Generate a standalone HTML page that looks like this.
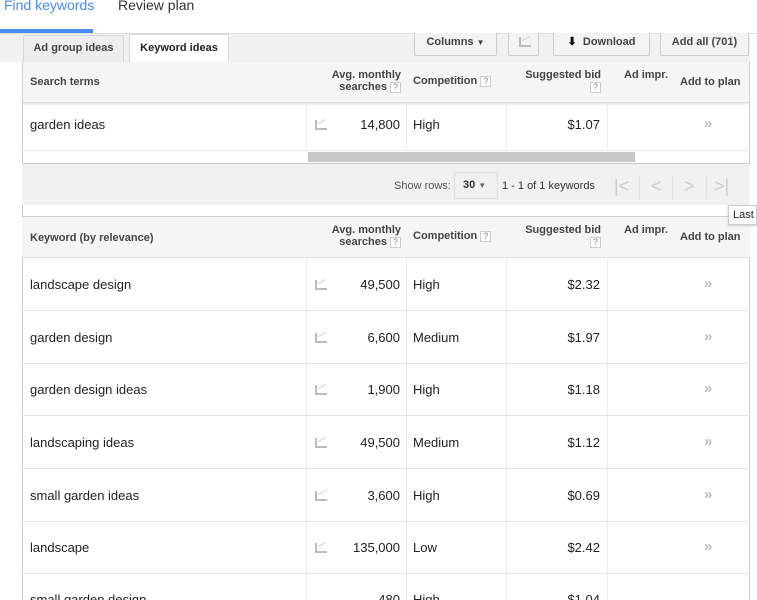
<!DOCTYPE html>
<html><head><style>
*{margin:0;padding:0;box-sizing:border-box}
html,body{width:757px;height:600px;overflow:hidden}
body{background:#fff;font-family:"Liberation Sans",Arial,sans-serif;font-size:13px;color:#222;position:relative}
.a{position:absolute}
.b{font-weight:bold;font-size:11px;color:#444}
.btn{position:absolute;top:33px;height:23px;border:1px solid #ccc;border-top:none;background:#f3f3f3;border-radius:0 0 2px 2px;font-weight:bold;font-size:11px;color:#444;text-align:center;line-height:18px}
.q{display:inline-block;width:11px;height:11px;border:1px solid #ccc;font-size:9px;line-height:9px;text-align:center;color:#888;font-weight:normal;vertical-align:middle;background:#fff}
.vl{position:absolute;width:1px;background:#ebebeb}
.hl{position:absolute;height:1px;background:#e5e5e5;left:22px;width:728px}
.chart{position:absolute;width:12px;height:10px;border-left:2px solid #bbb;border-bottom:2px solid #bbb}
.chart:after{content:"";position:absolute;left:1px;top:1px;width:8px;height:4px;border-top:1px solid #ccc;transform:skewY(-30deg)}
.dr{position:absolute;color:#bbb;font-size:15px;font-weight:bold}
</style></head><body>
<div class="a" style="left:4px;top:-3px;font-size:14px;color:#4a8af4">Find keywords</div>
<div class="a" style="left:118px;top:-3px;font-size:14px;color:#333">Review plan</div>
<div class="a" style="left:0;top:29px;width:93px;height:4px;background:#4a8af4"></div>
<div class="a" style="left:0;top:33px;width:757px;height:1px;background:#ddd"></div>
<div class="a" style="left:0;top:34px;width:750px;height:28px;background:#f1f1f1"></div>
<div class="a" style="left:22px;top:62px;width:1px;height:538px;background:#ccc"></div>
<div class="a" style="left:749px;top:62px;width:1px;height:538px;background:#ccc"></div>
<div class="a" style="left:23px;top:35px;width:101px;height:27px;background:#eee;border:1px solid #d6d6d6;border-bottom:none;border-radius:2px 2px 0 0;font-weight:bold;font-size:11px;color:#444;text-align:center;line-height:25px">Ad group ideas</div>
<div class="a" style="left:129px;top:34px;width:100px;height:29px;background:#fff;border:1px solid #d6d6d6;border-bottom:none;border-radius:2px 2px 0 0;font-weight:bold;font-size:11px;color:#222;text-align:center;line-height:27px">Keyword ideas</div>
<div class="btn" style="left:414px;width:83px">Columns <span style="font-size:8px">▼</span></div>
<div class="btn" style="left:508px;width:31px"><div class="chart" style="left:10px;top:4px"></div></div>
<div class="btn" style="left:553px;width:97px"><span style="color:#111">⬇</span> &nbsp;Download</div>
<div class="btn" style="left:660px;width:89px">Add all (701)</div>

<div class="a" style="left:23px;top:62px;width:726px;height:41px;background:#f5f5f5;border-bottom:1px solid #ddd;box-shadow:0 1px 2px #ddd"></div>
<div class="a b" style="left:30px;top:76px">Search terms</div>
<div class="a b" style="left:320px;top:69px;width:81px;text-align:right;line-height:12px">Avg. monthly<br>searches <span class="q">?</span></div>
<div class="a b" style="left:413px;top:75px">Competition <span class="q">?</span></div>
<div class="a b" style="left:510px;top:69px;width:91px;text-align:right;line-height:12px">Suggested bid<br><span class="q">?</span></div>
<div class="a b" style="left:624px;top:69px">Ad impr.</div>
<div class="a b" style="left:680px;top:76px">Add to plan</div>
<div class="vl" style="left:306px;top:103px;height:47px"></div>
<div class="vl" style="left:406px;top:103px;height:47px"></div>
<div class="vl" style="left:506px;top:103px;height:47px"></div>
<div class="vl" style="left:607px;top:103px;height:47px"></div>
<div class="a" style="left:30px;top:117px">garden ideas</div>
<div class="chart" style="left:315px;top:120px"></div>
<div class="a" style="left:330px;top:117px;width:70px;text-align:right">14,800</div>
<div class="a" style="left:413px;top:117px">High</div>
<div class="a" style="left:520px;top:117px;width:80px;text-align:right">$1.07</div>
<div class="dr" style="left:704px;top:115px">»</div>
<div class="hl" style="top:150px;background:#ebebeb"></div>
<div class="a" style="left:308px;top:152px;width:327px;height:10px;background:#c8c8c8"></div>
<div class="a" style="left:22px;top:163px;width:728px;height:42px;background:#f1f1f1;border-top:1px solid #ccc"></div>
<div class="a" style="left:394px;top:180px;font-size:11px;color:#555">Show rows:</div>
<div class="a" style="left:454px;top:172px;width:44px;height:27px;border:1px solid #ddd;border-radius:2px;font-weight:bold;font-size:11px;line-height:25px;padding-left:8px;color:#333">30 <span style="font-size:8px;color:#666">▼</span></div>
<div class="a" style="left:502px;top:180px;font-size:11px;color:#333">1 - 1 of 1 keywords</div>
<div class="a" style="left:606px;top:173px;width:135px;height:27px;color:#ccc;font-size:18px;line-height:26px">
<span class="a" style="left:8px">|&lt;</span><span class="a" style="left:45px">&lt;</span><span class="a" style="left:78px">&gt;</span><span class="a" style="left:108px">&gt;|</span></div>
<div class="vl" style="left:639px;top:175px;height:24px;background:#e4e4e4"></div>
<div class="vl" style="left:672px;top:175px;height:24px;background:#e4e4e4"></div>
<div class="vl" style="left:706px;top:175px;height:24px;background:#e4e4e4"></div>
<div class="a" style="left:23px;top:205px;width:726px;height:11px;background:#fff"></div>

<div class="a" style="left:22px;top:216px;width:728px;height:42px;background:#f5f5f5;border-top:1px solid #ccc;border-bottom:1px solid #ddd"></div>
<div class="a b" style="left:30px;top:232px">Keyword (by relevance)</div>
<div class="a b" style="left:320px;top:224px;width:81px;text-align:right;line-height:12px">Avg. monthly<br>searches <span class="q">?</span></div>
<div class="a b" style="left:413px;top:230px">Competition <span class="q">?</span></div>
<div class="a b" style="left:510px;top:224px;width:91px;text-align:right;line-height:12px">Suggested bid<br><span class="q">?</span></div>
<div class="a b" style="left:624px;top:224px">Ad impr.</div>
<div class="a b" style="left:680px;top:231px">Add to plan</div>
<div class="a" style="left:728px;top:205px;width:29px;height:20px;background:#fff;border:1px solid #ccc;font-size:11px;line-height:18px;padding-left:4px;box-shadow:0 1px 2px #ccc">Last</div>
<div class="vl" style="left:306px;top:258px;height:342px"></div>
<div class="vl" style="left:406px;top:258px;height:342px"></div>
<div class="vl" style="left:506px;top:258px;height:342px"></div>
<div class="vl" style="left:607px;top:258px;height:342px"></div>

<div class="a" style="left:30px;top:277px">landscape design</div><div class="chart" style="left:315px;top:280px"></div><div class="a" style="left:330px;top:277px;width:70px;text-align:right">49,500</div><div class="a" style="left:413px;top:277px">High</div><div class="a" style="left:520px;top:277px;width:80px;text-align:right">$2.32</div><div class="dr" style="left:704px;top:275px">»</div>
<div class="hl" style="top:310px"></div>
<div class="a" style="left:30px;top:330px">garden design</div><div class="chart" style="left:315px;top:333px"></div><div class="a" style="left:330px;top:330px;width:70px;text-align:right">6,600</div><div class="a" style="left:413px;top:330px">Medium</div><div class="a" style="left:520px;top:330px;width:80px;text-align:right">$1.97</div><div class="dr" style="left:704px;top:328px">»</div>
<div class="hl" style="top:363px"></div>
<div class="a" style="left:30px;top:382px">garden design ideas</div><div class="chart" style="left:315px;top:385px"></div><div class="a" style="left:330px;top:382px;width:70px;text-align:right">1,900</div><div class="a" style="left:413px;top:382px">High</div><div class="a" style="left:520px;top:382px;width:80px;text-align:right">$1.18</div><div class="dr" style="left:704px;top:380px">»</div>
<div class="hl" style="top:415px"></div>
<div class="a" style="left:30px;top:435px">landscaping ideas</div><div class="chart" style="left:315px;top:438px"></div><div class="a" style="left:330px;top:435px;width:70px;text-align:right">49,500</div><div class="a" style="left:413px;top:435px">Medium</div><div class="a" style="left:520px;top:435px;width:80px;text-align:right">$1.12</div><div class="dr" style="left:704px;top:433px">»</div>
<div class="hl" style="top:468px"></div>
<div class="a" style="left:30px;top:488px">small garden ideas</div><div class="chart" style="left:315px;top:491px"></div><div class="a" style="left:330px;top:488px;width:70px;text-align:right">3,600</div><div class="a" style="left:413px;top:488px">High</div><div class="a" style="left:520px;top:488px;width:80px;text-align:right">$0.69</div><div class="dr" style="left:704px;top:486px">»</div>
<div class="hl" style="top:521px"></div>
<div class="a" style="left:30px;top:540px">landscape</div><div class="chart" style="left:315px;top:543px"></div><div class="a" style="left:330px;top:540px;width:70px;text-align:right">135,000</div><div class="a" style="left:413px;top:540px">Low</div><div class="a" style="left:520px;top:540px;width:80px;text-align:right">$2.42</div><div class="dr" style="left:704px;top:538px">»</div>
<div class="hl" style="top:573px"></div>
<div class="a" style="left:30px;top:592px">small garden design</div><div class="a" style="left:330px;top:592px;width:70px;text-align:right">480</div><div class="a" style="left:413px;top:592px">High</div><div class="a" style="left:520px;top:592px;width:80px;text-align:right">$1.04</div>
</body></html>
